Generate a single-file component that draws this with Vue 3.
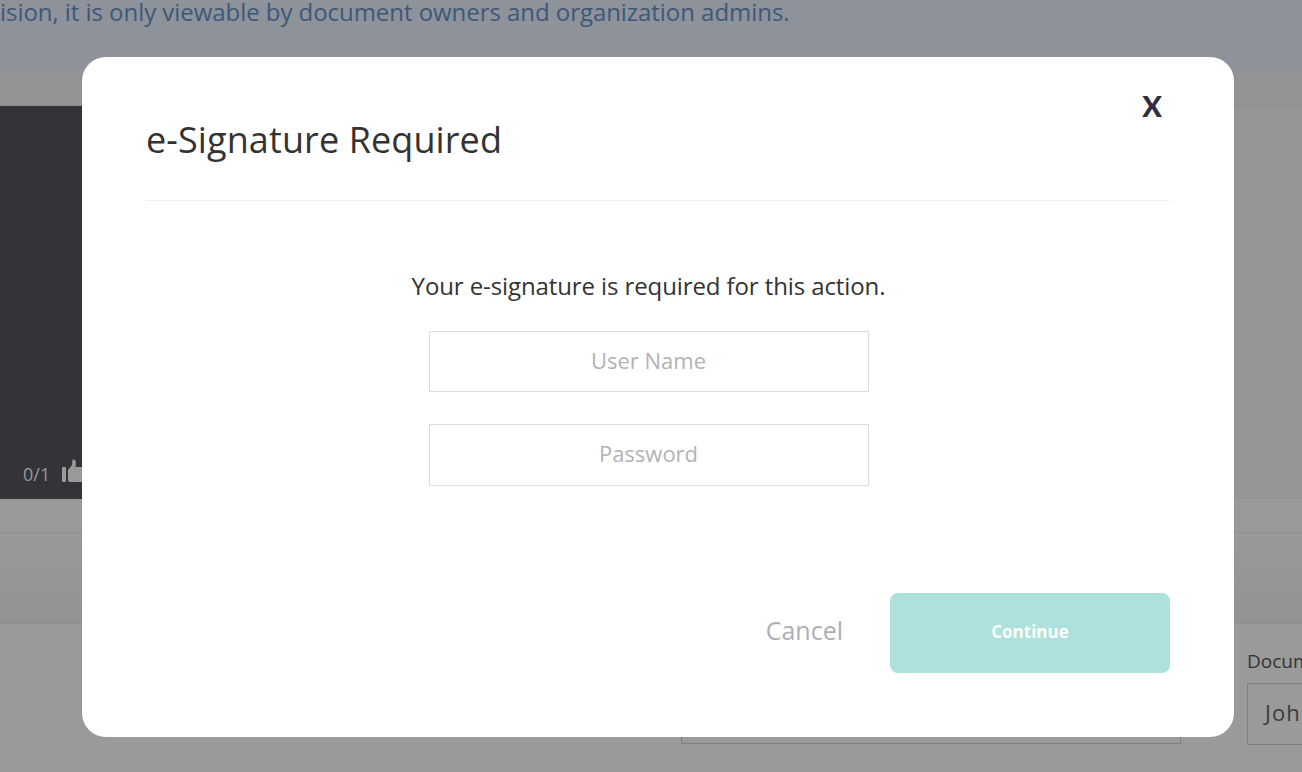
<template>
  <div class="page">
    <div class="banner"><p class="banner-text">ision, it is only viewable by document owners and organization admins.</p></div>
    <div class="toolbar"></div>
    <div class="workspace">
      <div class="viewer">
        <span class="count">0/1</span>
        <svg class="thumb" width="24" height="26" viewBox="0 0 24 26" aria-hidden="true">
          <rect x="0" y="8" width="4" height="15" rx="1" fill="#999" />
          <path d="M6 11 L10 6 L10.5 0.5 Q14 0 14 4 L13.5 8 L24 8 L24 23 L9 23 Q6 23 6 21 Z" fill="#999" />
        </svg>
      </div>
    </div>
    <div class="strip"></div>
    <div class="row"></div>
    <div class="footer">
      <div class="wide-field"></div>
      <div class="doc-field">
        <span class="doc-label">Document</span>
        <div class="doc-input">John</div>
      </div>
    </div>

    <div class="modal" role="dialog">
      <button class="close" type="button">X</button>
      <h2 class="title">e-Signature Required</h2>
      <div class="form">
        <p class="lead">Your e-signature is required for this action.</p>
        <input class="field" placeholder="User Name" />
        <input class="field second" placeholder="Password" />
      </div>
      <div class="actions">
        <button class="cancel" type="button">Cancel</button>
        <button class="continue" type="button">Continue</button>
      </div>
    </div>
  </div>
</template>

<script setup>
</script>

<style>
html, body { margin: 0; overflow: hidden; }
</style>

<style scoped>
.page {
  position: relative;
  width: 1302px;
  height: 772px;
  overflow: hidden;
  display: flex;
  flex-direction: column;
  background: #9a9a9a;
  font-family: "Open Sans", Lato, sans-serif;
}
.banner {
  height: 73px;
  flex: none;
  background: #8d929b;
  overflow: hidden;
}
.banner-text {
  margin: -3px 0 0;
  font-size: 24px;
  letter-spacing: -0.05px;
  line-height: 30px;
  white-space: nowrap;
  color: #3e5878;
}
.toolbar {
  height: 32px;
  flex: none;
  background: #939393;
  border-bottom: 1px solid #8a8a8a;
}
.workspace {
  height: 393px;
  flex: none;
  background: #959595;
}
.viewer {
  width: 100px;
  height: 100%;
  background: #333338;
  display: flex;
  align-items: flex-end;
  padding: 0 0 14px 23px;
  box-sizing: border-box;
  gap: 12px;
}
.count {
  color: #999;
  font-size: 18px;
  line-height: 22px;
}
.thumb { flex: none; }
.strip {
  height: 33px;
  flex: none;
  background: #999;
  border-bottom: 1px solid #8e8e8e;
}
.row {
  height: 90px;
  flex: none;
  background: linear-gradient(#989898, #939393);
  border-bottom: 1px solid #8e8e8e;
}
.footer {
  flex: 1;
  display: flex;
  align-items: flex-start;
  padding: 25px 0 0 681px;
  gap: 66px;
  min-width: 0;
}
.wide-field {
  width: 500px;
  height: 95px;
  flex: none;
  box-sizing: border-box;
  border: 1px solid #808080;
}
.doc-field {
  display: flex;
  flex-direction: column;
  flex: none;
  gap: 10px;
}
.doc-label {
  color: #333;
  font-size: 19px;
  line-height: 24px;
  white-space: nowrap;
}
.doc-input {
  width: 120px;
  height: 62px;
  box-sizing: border-box;
  border: 1px solid #808080;
  padding-left: 17px;
  color: #3a3a3a;
  font-size: 22px;
  letter-spacing: 1px;
  line-height: 56px;
}
.modal {
  position: absolute;
  left: 82px;
  top: 57px;
  width: 1152px;
  height: 680px;
  box-sizing: border-box;
  padding: 0 64px;
  background: #fff;
  border-radius: 24px;
  display: flex;
  flex-direction: column;
}
.close {
  position: absolute;
  left: 1058px;
  top: 33px;
  width: 24px;
  height: 32px;
  padding: 0;
  border: 0;
  background: none;
  color: #2f2d3f;
  font: 900 29px/32px Lato, sans-serif;
}
.title {
  margin: 0;
  height: 144px;
  box-sizing: border-box;
  padding-top: 61px;
  border-bottom: 1px solid #efefef;
  color: #333;
  font-size: 36px;
  letter-spacing: 0.1px;
  line-height: 44px;
  font-weight: 400;
}
.form {
  display: flex;
  flex-direction: column;
  align-items: center;
  margin-right: 19px;
  padding-top: 69px;
}
.lead {
  margin: 0 0 29px;
  color: #333;
  font-size: 24px;
  letter-spacing: -0.1px;
  line-height: 32px;
}
.field {
  width: 440px;
  height: 61px;
  box-sizing: border-box;
  border: 1px solid #dcdcdc;
  background: #fff;
  outline: none;
  text-align: center;
  font: 400 22px "Open Sans", sans-serif;
  color: #333;
  padding-bottom: 5px;
}
.field::placeholder { color: #b3b3b3; opacity: 1; }
.second { margin-top: 32px; height: 62px; }
.actions {
  display: flex;
  justify-content: flex-end;
  align-items: center;
  margin-top: 107px;
  gap: 47px;
}
.cancel {
  padding: 0 0 6px;
  border: 0;
  background: none;
  color: #aeaeb6;
  font: 400 25px "Open Sans", sans-serif;
}
.continue {
  width: 280px;
  height: 80px;
  border: 0;
  border-radius: 8px;
  padding-bottom: 5px;
  background: #ade2dc;
  color: #fff;
  font: 700 17px "Open Sans", sans-serif;
}
</style>
